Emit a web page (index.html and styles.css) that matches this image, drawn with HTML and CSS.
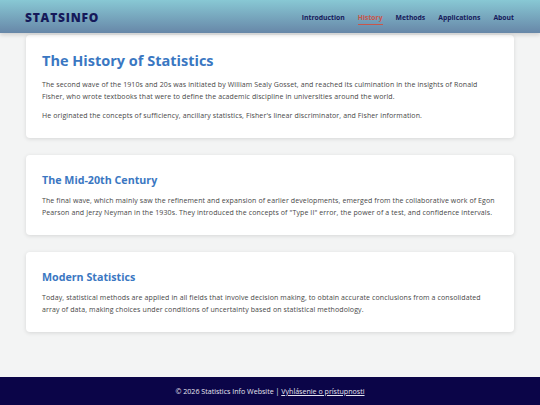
FILE: index.html
```html
<!DOCTYPE html>
<html lang="en">
<head>
<meta charset="utf-8">
<title>StatsInfo - History</title>
<link rel="stylesheet" href="styles.css">
</head>
<body>
<header class="site-header">
  <div class="logo">STATSINFO</div>
  <nav class="nav">
    <a href="#" class="nav-link">Introduction</a>
    <a href="#" class="nav-link active">History</a>
    <a href="#" class="nav-link">Methods</a>
    <a href="#" class="nav-link">Applications</a>
    <a href="#" class="nav-link">About</a>
  </nav>
</header>
<main class="content">
  <section class="card card-first">
    <h1 class="title">The History of Statistics</h1>
    <p class="text">The second wave of the 1910s and 20s was initiated by William Sealy Gosset, and reached its culmination in the insights of Ronald Fisher, who wrote textbooks that were to define the academic discipline in universities around the world.</p>
    <p class="text">He originated the concepts of sufficiency, ancillary statistics, Fisher's linear discriminator, and Fisher information.</p>
  </section>
  <section class="card">
    <h2 class="subtitle">The Mid-20th Century</h2>
    <p class="text">The final wave, which mainly saw the refinement and expansion of earlier developments, emerged from the collaborative work of Egon Pearson and Jerzy Neyman in the 1930s. They introduced the concepts of "Type II" error, the power of a test, and confidence intervals.</p>
  </section>
  <section class="card">
    <h2 class="subtitle">Modern Statistics</h2>
    <p class="text">Today, statistical methods are applied in all fields that involve decision making, to obtain accurate conclusions from a consolidated array of data, making choices under conditions of uncertainty based on statistical methodology.</p>
  </section>
</main>
<footer class="site-footer">
  <p class="footer-text">© 2026 Statistics Info Website | <a href="#" class="footer-link">Vyhlásenie o prístupnosti</a></p>
</footer>
</body>
</html>
```
FILE: styles.css
```css
* { box-sizing: border-box; }
html, body { margin: 0; padding: 0; }
body {
  font-family: "Open Sans", "DejaVu Sans", sans-serif;
  background: #f3f4f4;
  color: #444;
  width: 540px;
  height: 405px;
  display: flex;
  flex-direction: column;
  overflow: hidden;
}
.site-header {
  height: 33px;
  background: linear-gradient(to bottom, #88c8d4, #6787a8);
  display: flex;
  align-items: center;
  justify-content: space-between;
  padding: 1px 26px 0 25px;
  box-shadow: 0 2px 4px rgba(0,0,0,0.15);
  position: relative;
  z-index: 2;
  flex-shrink: 0;
}
.logo {
  font-weight: 800;
  font-size: 12px;
  letter-spacing: 0.8px;
  color: #15195a;
}
.nav {
  display: flex;
  gap: 13px;
  align-items: center;
}
.nav-link {
  font-size: 6.8px;
  font-weight: 700;
  color: #15195a;
  text-decoration: none;
  padding-top: 3px;
  padding-bottom: 2px;
  border-bottom: 1px solid transparent;
}
.nav-link.active {
  color: #c8564a;
  border-bottom-color: #c8564a;
}
.content {
  flex: 1;
  padding: 2px 26px 0 26px;
  display: flex;
  flex-direction: column;
  gap: 17px;
}
.card {
  background: #fff;
  border-radius: 4px;
  box-shadow: 0 1px 4px rgba(0,0,0,0.12);
  padding: 18px 16px 16px 16px;
}
.card-first { padding-top: 17px; }
.title {
  margin: 0 0 9px 0;
  font-size: 14.5px;
  font-weight: 700;
  color: #3a77c2;
  line-height: 18px;
}
.subtitle {
  margin: 0 0 8px 0;
  font-size: 10.7px;
  font-weight: 700;
  color: #3a77c2;
  line-height: 14px;
}
.text {
  margin: 0 0 7px 0;
  font-size: 7px;
  letter-spacing: 0.11px;
  line-height: 12px;
  color: #474747;
}
.text:last-child { margin-bottom: 0; }
.site-footer {
  height: 28px;
  background: #0b0548;
  display: flex;
  align-items: center;
  justify-content: center;
  flex-shrink: 0;
}
.footer-text {
  margin: 0;
  font-size: 7.1px;
  color: #e6e6f0;
}
.footer-link {
  color: #e6e6f0;
  text-decoration: underline;
}
```
